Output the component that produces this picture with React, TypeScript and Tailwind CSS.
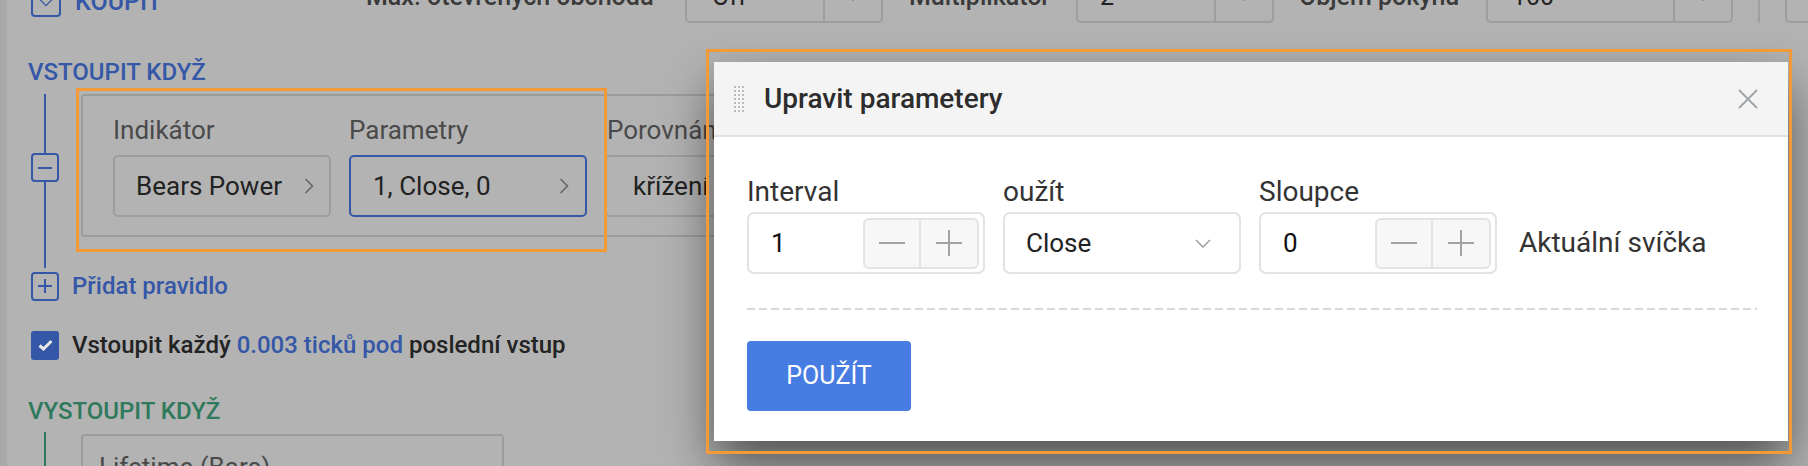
import React from "react";

const BLUE = "#3557a7";

function ChevronRight({ color = "#666" }: { color?: string }) {
  return (
    <svg width="10" height="16" viewBox="0 0 10 16" style={{ color }}>
      <polyline points="1.5,1 8.5,8 1.5,15" fill="none" stroke="currentColor" strokeWidth="1.6" />
    </svg>
  );
}

function ChevronDown({ color = "#999", w = 16 }: { color?: string; w?: number }) {
  return (
    <svg width={w} height="9" viewBox="0 0 16 9" style={{ color }}>
      <polyline points="1,1 8,8 15,1" fill="none" stroke="currentColor" strokeWidth="1.4" />
    </svg>
  );
}

function Stepper() {
  return (
    <div className="flex h-[51px] w-[116px] rounded-[6px] border-2 border-[#e3e3e3] bg-[#f7f7f7]">
      <div className="flex w-1/2 items-center justify-center border-r-2 border-[#e3e3e3]">
        <svg width="26" height="26" viewBox="0 0 26 26">
          <line x1="0" y1="13" x2="26" y2="13" stroke="#a2a2a2" strokeWidth="2" />
        </svg>
      </div>
      <div className="flex w-1/2 items-center justify-center">
        <svg width="26" height="26" viewBox="0 0 26 26">
          <line x1="0" y1="13" x2="26" y2="13" stroke="#a2a2a2" strokeWidth="2" />
          <line x1="13" y1="0" x2="13" y2="26" stroke="#a2a2a2" strokeWidth="2" />
        </svg>
      </div>
    </div>
  );
}

function NumberField({ value }: { value: string }) {
  return (
    <div className="flex h-[62px] w-[238px] items-center justify-between rounded-[7px] border-2 border-[#e2e2e2] bg-white pl-[22px] pr-[4px]">
      <span className="text-[26px] text-[#111]">{value}</span>
      <Stepper />
    </div>
  );
}

function TopBox({ value, width, pl }: { value: string; width: string; pl: string }) {
  return (
    <div className={`flex h-[52px] ${width} shrink-0 rounded-b-[5px] border-2 border-[#9e9e9e]`}>
      <div className={`flex flex-1 items-center ${pl} text-[25px] text-[#222]`}>{value}</div>
      <div className="flex w-[58px] items-center justify-center border-l-2 border-[#9e9e9e]">
        <ChevronDown color="#555" w={12} />
      </div>
    </div>
  );
}

function RailBox({ plus }: { plus?: boolean }) {
  return (
    <div className="flex h-[29px] w-[28px] shrink-0 items-center justify-center rounded-[4px] border-2 border-[#3557a7]">
      <svg width="14" height="14" viewBox="0 0 14 14">
        <line x1="0" y1="7" x2="14" y2="7" stroke={BLUE} strokeWidth="2" />
        {plus && <line x1="7" y1="0" x2="7" y2="14" stroke={BLUE} strokeWidth="2" />}
      </svg>
    </div>
  );
}

export default function App() {
  return (
    <div className="relative h-[466px] w-[1808px] overflow-hidden bg-[#b3b3b3] font-['Roboto','Liberation_Sans',sans-serif]">
      <div className="flex h-full">
        <div className="w-[7px] shrink-0 bg-[#a9a9a9]" />
        <div className="flex-1">
          {/* top toolbar row (cut off) */}
          <div className="-mt-[29px] flex h-[52px] items-center whitespace-nowrap">
            <div className="mt-[10px] flex w-[359px] shrink-0 items-center pl-[24px]">
              <div className="flex h-[30px] w-[30px] items-center justify-center rounded-[4px] border-2 border-[#3557a7]">
                <ChevronDown color={BLUE} w={14} />
              </div>
              <span className="ml-[14px] text-[25px] font-medium text-[#3557a7]">KOUPIT</span>
            </div>
            <div className="w-[297px] shrink-0 text-[25px] font-medium text-[#3a3a3a]">Max. otevřených obchodů</div>
            <div className="ml-[22px]">
              <TopBox value="Off" width="w-[198px]" pl="pl-[25px]" />
            </div>
            <div className="ml-[26px] w-[145px] shrink-0 text-[25px] font-medium text-[#3a3a3a]">Multiplikátor</div>
            <div className="ml-[22px]">
              <TopBox value="2" width="w-[198px]" pl="pl-[22px]" />
            </div>
            <div className="ml-[25px] w-[165px] shrink-0 text-[25px] font-medium text-[#3a3a3a]">Objem pokynů</div>
            <div className="ml-[22px]">
              <TopBox value="100" width="w-[247px]" pl="pl-[24px]" />
            </div>
            <div className="ml-[25px] h-[52px] w-[2px] shrink-0 bg-[#a0a0a0]" />
            <div className="ml-[25px] h-[52px] w-[100px] shrink-0 rounded-b-[5px] border-2 border-[#9e9e9e]" />
          </div>

          {/* VSTOUPIT KDYŽ */}
          <div className="mt-[34px] h-[30px] pl-[21px] text-[24px] font-medium leading-[30px] text-[#3557a7]">
            VSTOUPIT KDYŽ
          </div>

          {/* rule block */}
          <div className="mt-[7px] flex">
            <div className="ml-[24px] flex w-[28px] shrink-0 flex-col items-center">
              <div className="h-[59px] w-[2px] bg-[#3557a7]" />
              <RailBox />
              <div className="h-[86px] w-[2px] bg-[#3557a7]" />
            </div>
            <div className="ml-[22px] h-[143px] w-[1200px] shrink-0 rounded-[4px] border-2 border-[#9c9c9c] pl-[30px] pt-[19px]">
              <div className="flex gap-[18px]">
                <div className="w-[218px] shrink-0">
                  <div className="h-[30px] text-[26px] leading-[30px] text-[#4a4a4a]">Indikátor</div>
                  <div className="mt-[10px] flex h-[62px] items-center justify-between rounded-[5px] border-2 border-[#9e9e9e] pl-[21px] pr-[15px] text-[26px] text-[#222]">
                    <span>Bears Power</span>
                    <ChevronRight />
                  </div>
                </div>
                <div className="w-[238px] shrink-0">
                  <div className="h-[30px] text-[26px] leading-[30px] text-[#4a4a4a]">Parametry</div>
                  <div className="mt-[10px] flex h-[62px] items-center justify-between rounded-[5px] border-2 border-[#3557a7] pl-[22px] pr-[16px] text-[26px] text-[#222]">
                    <span>1, Close, 0</span>
                    <ChevronRight />
                  </div>
                </div>
                <div className="w-[300px] shrink-0">
                  <div className="h-[30px] pl-[2px] text-[26px] leading-[30px] text-[#4a4a4a]">Porovnání</div>
                  <div className="mt-[10px] flex h-[62px] items-center rounded-[5px] border-2 border-[#9e9e9e] pl-[26px] text-[26px] text-[#222]">
                    <span>křížení</span>
                  </div>
                </div>
              </div>
            </div>
          </div>

          {/* Přidat pravidlo */}
          <div className="ml-[24px] flex items-center">
            <RailBox plus />
            <span className="ml-[13px] text-[24px] font-medium text-[#3557a7]">Přidat pravidlo</span>
          </div>

          {/* checkbox row */}
          <div className="ml-[24px] mt-[23px] flex items-center">
            <div className="flex h-[29px] w-[28px] shrink-0 items-center justify-center rounded-[3px] bg-[#3557a7]">
              <svg width="15" height="12" viewBox="0 0 15 12">
                <polyline points="1.5,6.5 5.5,10 13.5,2" fill="none" stroke="#e8e8e8" strokeWidth="3" />
              </svg>
            </div>
            <span className="ml-[13px] whitespace-nowrap text-[24px] font-medium text-[#232323]">
              Vstoupit každý <span className="text-[#3557a7]">0.003 ticků pod</span> poslední vstup
            </span>
          </div>

          {/* VYSTOUPIT KDYŽ */}
          <div className="mt-[33px] h-[30px] pl-[21px] text-[24px] font-medium leading-[30px] text-[#2f7a5c]">
            VYSTOUPIT KDYŽ
          </div>
          <div className="flex">
            <div className="ml-[24px] mt-[6px] flex w-[28px] shrink-0 justify-center">
              <div className="h-[60px] w-[2px] bg-[#2f7a5c]" />
            </div>
            <div className="ml-[22px] mt-[8px] h-[100px] w-[423px] shrink-0 rounded-[4px] border-2 border-[#9c9c9c] pl-[16px] pt-[16px] text-[26px] leading-[30px] text-[#4a4a4a]">
              Lifetime (Bars)
            </div>
          </div>
        </div>
      </div>

      {/* Modal */}
      <div className="absolute left-[714px] top-[62px] w-[1074px] bg-white shadow-[0_24px_48px_rgba(0,0,0,0.55)]">
        <div className="flex h-[75px] items-center border-b-2 border-[#e1e1e1] bg-[#f4f4f4] pl-[20px] pr-[30px]">
          <svg width="10" height="26" viewBox="0 0 10 26">
            {[0, 1, 2].map((c) =>
              [0, 1, 2, 3, 4, 5, 6].map((r) => (
                <rect key={`${c}-${r}`} x={c * 4} y={r * 4} width="2" height="2" fill="#bdbdbd" />
              ))
            )}
          </svg>
          <div className="ml-[20px] flex-1 text-[28px] font-medium text-[#2d2d2d]">Upravit parametery</div>
          <svg width="20" height="20" viewBox="0 0 20 20">
            <line x1="1" y1="1" x2="19" y2="19" stroke="#a0a4a8" strokeWidth="2" />
            <line x1="19" y1="1" x2="1" y2="19" stroke="#a0a4a8" strokeWidth="2" />
          </svg>
        </div>
        <div className="pb-[30px] pl-[33px] pr-[31px] pt-[38px]">
          <div className="flex items-end">
            <div className="w-[238px] shrink-0">
              <div className="mb-[4px] h-[33px] text-[28px] leading-[33px] text-[#333]">Interval</div>
              <NumberField value="1" />
            </div>
            <div className="ml-[18px] w-[238px] shrink-0">
              <div className="mb-[4px] h-[33px] text-[28px] leading-[33px] text-[#333]">oužít</div>
              <div className="flex h-[62px] items-center justify-between rounded-[7px] border-2 border-[#e2e2e2] bg-white pl-[21px] pr-[28px]">
                <span className="text-[26px] text-[#222]">Close</span>
                <ChevronDown color="#9a9a9a" />
              </div>
            </div>
            <div className="ml-[18px] w-[238px] shrink-0">
              <div className="mb-[4px] h-[33px] text-[28px] leading-[33px] text-[#333]">Sloupce</div>
              <NumberField value="0" />
            </div>
            <div className="ml-[22px] flex h-[62px] items-center text-[28px] text-[#333]">Aktuální svíčka</div>
          </div>
          <div className="mt-[34px] h-[2px] bg-[repeating-linear-gradient(90deg,#d6d8dc_0px,#d6d8dc_8px,transparent_8px,transparent_12px)]" />
          <button className="mt-[31px] flex h-[70px] w-[164px] items-center justify-center rounded-[4px] bg-[#477de2] text-[25px] text-white">
            POUŽÍT
          </button>
        </div>
      </div>

      {/* annotation frames */}
      <div className="pointer-events-none absolute left-[76px] top-[88px] h-[164px] w-[531px] border-[3px] border-[#f29a38]" />
      <div className="pointer-events-none absolute left-[706px] top-[49px] h-[405px] w-[1086px] border-[3px] border-[#f29a38]" />
    </div>
  );
}
